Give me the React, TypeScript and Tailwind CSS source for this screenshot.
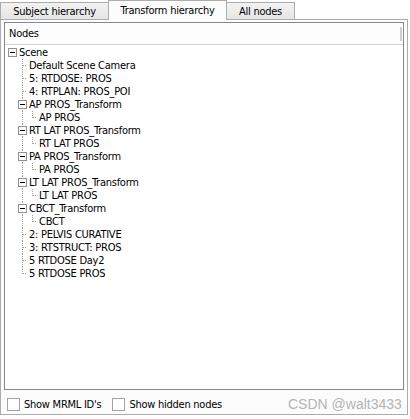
type Part = 'box' | 'boxline' | 'tee' | 'corner' | 'vert' | 'blank';

const rows: { label: string; parts: Part[] }[] = [
  { label: 'Scene', parts: ['box'] },
  { label: 'Default Scene Camera', parts: ['blank', 'tee'] },
  { label: '5: RTDOSE: PROS', parts: ['blank', 'tee'] },
  { label: '4: RTPLAN: PROS_POI', parts: ['blank', 'tee'] },
  { label: 'AP PROS_Transform', parts: ['blank', 'boxline'] },
  { label: 'AP PROS', parts: ['blank', 'vert', 'corner'] },
  { label: 'RT LAT PROS_Transform', parts: ['blank', 'boxline'] },
  { label: 'RT LAT PROS', parts: ['blank', 'vert', 'corner'] },
  { label: 'PA PROS_Transform', parts: ['blank', 'boxline'] },
  { label: 'PA PROS', parts: ['blank', 'vert', 'corner'] },
  { label: 'LT LAT PROS_Transform', parts: ['blank', 'boxline'] },
  { label: 'LT LAT PROS', parts: ['blank', 'vert', 'corner'] },
  { label: 'CBCT_Transform', parts: ['blank', 'boxline'] },
  { label: 'CBCT', parts: ['blank', 'vert', 'corner'] },
  { label: '2: PELVIS CURATIVE', parts: ['blank', 'tee'] },
  { label: '3: RTSTRUCT: PROS', parts: ['blank', 'tee'] },
  { label: '5 RTDOSE Day2', parts: ['blank', 'tee'] },
  { label: '5 RTDOSE PROS', parts: ['blank', 'corner'] },
];

function Branch({ kind }: { kind: Part }) {
  const dot = { stroke: '#a0a0a0', strokeWidth: 1, strokeDasharray: '1 1' };
  return (
    <svg width="10" height="13" viewBox="0 0 10 13" className="shrink-0" shapeRendering="crispEdges">
      {(kind === 'vert' || kind === 'tee' || kind === 'boxline') && (
        <line x1="5.5" y1="0" x2="5.5" y2="13" {...dot} />
      )}
      {kind === 'corner' && <line x1="5.5" y1="0" x2="5.5" y2="7" {...dot} />}
      {(kind === 'tee' || kind === 'corner') && <line x1="6" y1="6.5" x2="10" y2="6.5" {...dot} />}
      {(kind === 'box' || kind === 'boxline') && (
        <>
          <rect x="1.5" y="2.5" width="8" height="8" fill="#fff" stroke="#919191" />
          <line x1="3" y1="6.5" x2="8" y2="6.5" stroke="#000" />
        </>
      )}
    </svg>
  );
}

function CheckBox({ label }: { label: string }) {
  return (
    <div className="flex items-center gap-[4px]">
      <div className="w-[13px] h-[13px] border border-[#a3a3a3] bg-white" />
      <span>{label}</span>
    </div>
  );
}

export default function App() {
  return (
    <div className="w-[410px] h-[419px] bg-white relative text-[11px] tracking-[-0.25px] text-black font-['DejaVu_Sans_Condensed','Liberation_Sans',sans-serif] leading-none">
      {/* tabs */}
      <div className="flex items-end h-[19px]">
        <div className="w-[109px] h-[17px] border border-b-0 border-[#acacac] bg-gradient-to-b from-[#f2f2f2] to-[#e6e6e6] flex items-center justify-center">
          Subject hierarchy
        </div>
        <div className="w-[119px] h-[20px] -mb-px -ml-px relative z-10 border border-b-0 border-[#acacac] bg-[#fcfcfc] flex items-center justify-center">
          Transform hierarchy
        </div>
        <div className="w-[69px] h-[17px] -ml-px border border-b-0 border-[#acacac] bg-gradient-to-b from-[#f2f2f2] to-[#e6e6e6] flex items-center justify-center">
          All nodes
        </div>
      </div>

      {/* pane */}
      <div className="w-[408px] h-[396px] border border-[#acacac] bg-[#fcfcfc] pt-[2px] px-[3px] flex flex-col">
        <div className="h-[368px] border border-[#828790] bg-white flex flex-col">
          <div className="h-[22px] border-b border-[#d5d5d5] bg-[#fdfdfd] flex items-center justify-between pl-[4px] pr-[1px]">
            <span>Nodes</span>
            <div className="w-[2px] h-[14px] bg-[#cdcdcd]" />
          </div>
          <div className="pt-[1px] pl-[2px] flex flex-col">
            {rows.map((r) => (
              <div key={r.label} className="flex items-center h-[13px]">
                {r.parts.map((p, i) => (
                  <Branch key={i} kind={p} />
                ))}
                <span className="ml-[2px] whitespace-nowrap">{r.label}</span>
              </div>
            ))}
          </div>
        </div>
        <div className="flex items-center gap-[11px] pl-[3px] pt-[8px]">
          <CheckBox label="Show MRML ID's" />
          <CheckBox label="Show hidden nodes" />
        </div>
      </div>

      <div className="absolute left-[288px] top-[397px] text-[14px] tracking-normal text-[#b4b4b4] font-['Liberation_Sans',sans-serif]">
        CSDN @walt3433
      </div>
    </div>
  );
}
